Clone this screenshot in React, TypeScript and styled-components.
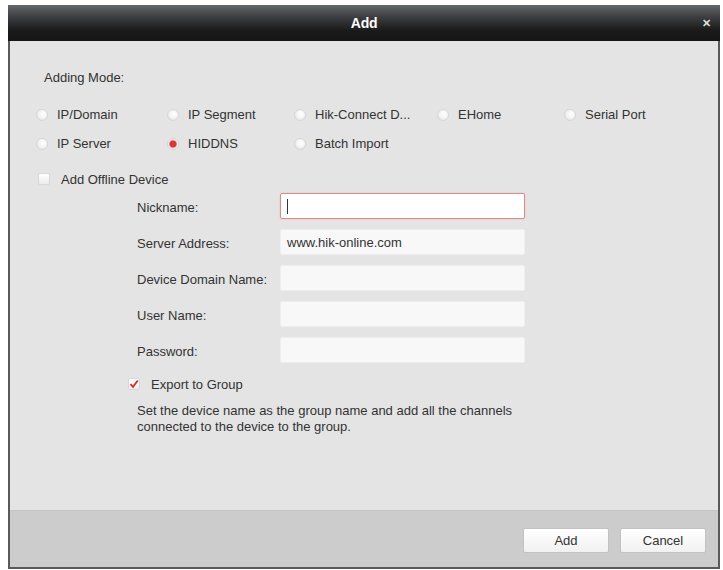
import React from "react";
import styled, { createGlobalStyle } from "styled-components";

const GlobalStyle = createGlobalStyle`
  html, body {
    margin: 0;
    padding: 0;
    background: #ffffff;
  }
  body {
    font-family: "Liberation Sans", Arial, sans-serif;
    font-size: 13px;
    color: #333;
  }
`;

const Page = styled.div`
  width: 723px;
  height: 570px;
  padding: 5px 3px 1px 8px;
  box-sizing: border-box;
`;

const Dialog = styled.div`
  display: flex;
  flex-direction: column;
  width: 712px;
  height: 564px;
  border: 2px solid #5a5a5a;
  border-top: none;
  box-sizing: border-box;
  background: #e4e4e4;
`;

const TitleBar = styled.div`
  display: grid;
  grid-template-columns: 1fr auto 1fr;
  align-items: center;
  height: 36px;
  margin: 0 -2px;
  background: linear-gradient(#64676b 0%, #3a3c3f 35%, #1b1b1b 70%, #151515 100%);
  color: #fff;
`;

const Title = styled.div`
  grid-column: 2;
  font-size: 14px;
  font-weight: bold;
  letter-spacing: -0.3px;
`;

const Close = styled.div`
  grid-column: 3;
  justify-self: end;
  padding-right: 9px;
  font-size: 11px;
  font-weight: bold;
  color: #ddd;
`;

const Body = styled.div`
  flex: 1;
  padding: 29px 0 0 24px;
`;

const ModeLabel = styled.div`
  margin-left: 10px;
  line-height: 16px;
  margin-bottom: 14px;
`;

const RadioGrid = styled.div`
  display: grid;
  grid-template-columns: 131px 127px 143px 127px auto;
  grid-auto-rows: 29px;
  align-items: center;
  padding-left: 2px;
`;

const Option = styled.label`
  display: flex;
  align-items: center;
  gap: 9px;
  white-space: nowrap;
`;

const Radio = styled.span<{ $on?: boolean }>`
  width: 12px;
  height: 12px;
  border-radius: 50%;
  box-sizing: border-box;
  border: 1px solid #d6d6d6;
  background: ${(p) =>
    p.$on
      ? "radial-gradient(circle, #d9363b 0, #d9363b 3px, #f2c8c8 4px, #fbfbfb 5px)"
      : "radial-gradient(circle at 60% 40%, #ffffff 0, #f3f3f3 50%, #d8d8d8 100%)"};
`;

const CheckRow = styled.label<{ $indent?: number; $height: number; $top?: number }>`
  display: flex;
  align-items: center;
  gap: 11px;
  height: ${(p) => p.$height}px;
  margin-left: ${(p) => p.$indent ?? 0}px;
  margin-top: ${(p) => p.$top ?? 0}px;
`;

const Box = styled.span`
  display: flex;
  align-items: center;
  justify-content: center;
  width: 10px;
  height: 10px;
  border: 1px solid #d8d8d8;
  border-radius: 2px;
  background: linear-gradient(#ffffff, #ececec);
`;

const FormGrid = styled.div`
  display: grid;
  grid-template-columns: 143px 245px;
  grid-auto-rows: 26px;
  row-gap: 10px;
  align-items: center;
  margin-left: 103px;
`;

const FieldLabel = styled.div`
  padding-top: 3px;
`;

const Input = styled.div<{ $focus?: boolean }>`
  display: flex;
  align-items: center;
  height: 26px;
  box-sizing: border-box;
  padding-left: 6px;
  background: ${(p) => (p.$focus ? "#ffffff" : "#f8f8f8")};
  border: 1px solid ${(p) => (p.$focus ? "#d98c8c" : "#efefef")};
  border-radius: 2px;
  box-shadow: ${(p) => (p.$focus ? "0 0 2px #f0b8b8" : "none")};
  color: #333;
`;

const Caret = styled.span`
  width: 1px;
  height: 15px;
  background: #333;
`;

const Note = styled.div`
  margin: 8px 0 0 103px;
  line-height: 16px;
  width: 380px;
`;

const Footer = styled.div`
  display: flex;
  justify-content: flex-end;
  align-items: flex-start;
  gap: 11px;
  height: 57px;
  padding: 17px 12px 0 0;
  box-sizing: border-box;
  background: #cccccc;
  border-top: 1px solid #c4c4c4;
`;

const Button = styled.button`
  width: 86px;
  height: 25px;
  border: 1px solid #c2c2c2;
  border-radius: 2px;
  background: linear-gradient(#ffffff, #f1f1f1);
  font-family: "Liberation Sans", Arial, sans-serif;
  font-size: 13px;
  color: #333;
`;

const modes = [
  { label: "IP/Domain" },
  { label: "IP Segment" },
  { label: "Hik-Connect D..." },
  { label: "EHome" },
  { label: "Serial Port" },
  { label: "IP Server" },
  { label: "HIDDNS", on: true },
  { label: "Batch Import" },
];

const fields = [
  { label: "Nickname:", focus: true },
  { label: "Server Address:", value: "www.hik-online.com" },
  { label: "Device Domain Name:" },
  { label: "User Name:" },
  { label: "Password:" },
];

export default function App() {
  return (
    <>
      <GlobalStyle />
      <Page>
        <Dialog>
          <TitleBar>
            <Title>Add</Title>
            <Close>✕</Close>
          </TitleBar>
          <Body>
            <ModeLabel>Adding Mode:</ModeLabel>
            <RadioGrid>
              {modes.map((m) => (
                <Option key={m.label}>
                  <Radio $on={m.on} />
                  {m.label}
                </Option>
              ))}
            </RadioGrid>
            <CheckRow $height={28} $indent={4} $top={7}>
              <Box />
              Add Offline Device
            </CheckRow>
            <FormGrid>
              {fields.map((f) => (
                <React.Fragment key={f.label}>
                  <FieldLabel>{f.label}</FieldLabel>
                  <Input $focus={f.focus}>
                    {f.focus ? <Caret /> : f.value}
                  </Input>
                </React.Fragment>
              ))}
            </FormGrid>
            <CheckRow $height={22} $indent={94} $top={10}>
              <Box>
                <svg width="10" height="10" viewBox="0 0 10 10">
                  <path
                    d="M1.5 5.2 L4 7.8 L8.8 1.5"
                    fill="none"
                    stroke="#d42a2a"
                    strokeWidth="1.8"
                  />
                </svg>
              </Box>
              Export to Group
            </CheckRow>
            <Note>
              Set the device name as the group name and add all the channels
              connected to the device to the group.
            </Note>
          </Body>
          <Footer>
            <Button>Add</Button>
            <Button>Cancel</Button>
          </Footer>
        </Dialog>
      </Page>
    </>
  );
}
